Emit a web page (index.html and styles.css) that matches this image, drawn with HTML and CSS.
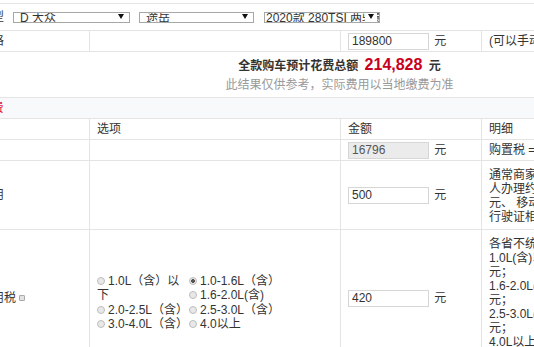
FILE: index.html
```html
<!DOCTYPE html>
<html lang="zh-CN">

<head>
    <meta charset="UTF-8">
    <meta name="viewport" content="width=device-width, initial-scale=1.0">
    <title>购车计算器</title>
    <link rel="stylesheet" href="styles.css">
</head>

<body>
    <div class="calc">
        <table class="calc-table">
            <colgroup>
                <col class="col-name">
                <col class="col-opt">
                <col class="col-amt">
                <col class="col-note">
            </colgroup>

            <tr class="row-car">
                <td colspan="4">
                    <div class="car-pick">
                        <span class="car-label">选择车型</span>
                        <div class="fake-select sel-brand"><span class="sel-text">D 大众</span><i class="sel-arrow"></i></div>
                        <div class="fake-select sel-series"><span class="sel-text">途岳</span><i class="sel-arrow"></i></div>
                        <div class="fake-select sel-model"><span class="sel-text">2020款 280TSI 两驱豪华版</span><i class="sel-arrow"></i></div>
                    </div>
                </td>
            </tr>

            <tr>
                <td class="name">裸车价格</td>
                <td></td>
                <td><input class="amount" type="text" value="189800"> 元</td>
                <td class="note">(可以手动修改)</td>
            </tr>

            <tr class="row-total">
                <td colspan="4">
                    <div class="total-line">全款购车预计花费总额 <span class="total-num">214,828</span> 元</div>
                    <div class="total-tip">此结果仅供参考，实际费用以当地缴费为准</div>
                </td>
            </tr>

            <tr class="row-section">
                <td colspan="4"><span class="section-title">必要花费</span></td>
            </tr>

            <tr class="row-head">
                <td class="name">项目</td>
                <td>选项</td>
                <td>金额</td>
                <td>明细</td>
            </tr>

            <tr>
                <td class="name">购置税</td>
                <td></td>
                <td><input class="amount readonly" type="text" value="16796" readonly> 元</td>
                <td class="note">购置税 = 购车款/(1+13%)×购置税率(10%)</td>
            </tr>

            <tr class="row-plate">
                <td class="name">上牌费用</td>
                <td></td>
                <td><input class="amount" type="text" value="500"> 元</td>
                <td class="note note-block">通常商家提供的上牌服务收费约500元，个<br>人办理约373元，其中：车辆购置税费约<br>元、 移动证30元、上牌费用100元、<br>行驶证相关工本费约15元</td>
            </tr>

            <tr class="row-tax">
                <td class="name">车船使用税<i class="tip-icon"></i></td>
                <td>
                    <div class="radios">
                        <label class="radio"><i class="dot"></i>1.0L（含）以下</label>
                        <label class="radio"><i class="dot checked"></i>1.0-1.6L（含）</label>
                        <label class="radio"><i class="dot"></i>1.6-2.0L(含)</label>
                        <label class="radio"><i class="dot"></i>2.0-2.5L（含）</label>
                        <label class="radio"><i class="dot"></i>2.5-3.0L（含）</label>
                        <label class="radio"><i class="dot"></i>3.0-4.0L（含）</label>
                        <label class="radio"><i class="dot"></i>4.0以上</label>
                    </div>
                </td>
                <td><input class="amount" type="text" value="420"> 元</td>
                <td class="note note-tax">各省不统一，以北京为例(单位为每年)：<br>1.0L(含)以下300<br>元；<br>1.6-2.0L(含)480<br>元；<br>2.5-3.0L(含)1800<br>元；<br>4.0L以上5400<br>元</td>
            </tr>
        </table>
    </div>
</body>

</html>
```

FILE: styles.css
```css
body {
    margin: 0;
    padding: 0;
    font-family: "Liberation Sans", "Noto Sans CJK SC", sans-serif;
    font-size: 12px;
    color: #333;
    background-color: #fff;
    overflow: hidden;
}

/* the calculator is wider than the window, the first column is scrolled off */
.calc {
    width: 788px;
    margin-left: -55px;
    padding-top: 3px;
}

.calc-table {
    width: 788px;
    border-collapse: collapse;
    table-layout: fixed;
}

.col-name {
    width: 144px;
}

.col-opt {
    width: 251px;
}

.col-amt {
    width: 141px;
}

.col-note {
    width: 252px;
}

.calc-table td {
    border: 1px solid #e4e4e4;
    height: 20px;
    padding: 0 6px 0 7px;
    line-height: 14px;
    vertical-align: middle;
    white-space: nowrap;
    overflow: hidden;
}

.calc-table td.name {
    padding-left: 10px;
}

/* car picker */
.row-car td {
    height: 26px;
    padding-left: 10px;
}

.car-pick {
    display: flex;
    align-items: center;
}

.car-label {
    width: 57px;
}

.fake-select {
    position: relative;
    height: 9px;
    border: 1px solid #a7a7a7;
    overflow: hidden;
    background: #fff;
}

.sel-brand {
    width: 115px;
    margin-right: 9px;
}

.sel-series {
    width: 113px;
    margin-right: 10px;
}

.sel-model {
    width: 114px;
}

.sel-text {
    display: block;
    margin-top: -1px;
    padding: 0 16px 0 6px;
    line-height: 12px;
    overflow: hidden;
}

.sel-model .sel-text {
    padding-left: 1px;
}

.sel-arrow {
    position: absolute;
    right: 5px;
    top: 1px;
    width: 0;
    height: 0;
    border-left: 3px solid transparent;
    border-right: 3px solid transparent;
    border-top: 5px solid #111;
}

.sel-model .sel-arrow {
    background: #fff;
    box-shadow: 0 0 0 3px #fff;
}

/* inputs */
.amount {
    width: 81px;
    height: 17px;
    padding: 0 3px;
    margin: 0 2px 0 0;
    border: 1px solid #d6d6d6;
    box-sizing: border-box;
    font-family: "Liberation Sans", sans-serif;
    font-size: 12px;
    color: #333;
    vertical-align: middle;
}

.amount.readonly {
    background-color: #ebebeb;
    color: #555;
}

/* total */
.row-total td {
    height: auto;
    padding: 3px 0 3px;
    border-left: none;
    border-right: none;
    text-align: center;
}

.total-line {
    line-height: 20px;
    font-weight: bold;
}

.total-num {
    color: #c8001e;
    font-size: 16px;
    margin: 0 3px;
}

.total-tip {
    line-height: 18px;
    color: #999;
}

.row-section td {
    background-color: #f8f9fb;
    padding-left: 10px;
    border-left: none;
    border-right: none;
}

.section-title {
    color: #d9173f;
}

/* rows */
.note-block {
    line-height: 12px;
}

.row-plate td {
    height: 61px;
}

.row-plate td.note {
    vertical-align: top;
    padding-top: 7px;
}

.row-tax td.note {
    vertical-align: top;
    padding-top: 7px;
    padding-bottom: 3px;
}

.note-tax {
    line-height: 14px;
}

.tip-icon {
    display: inline-block;
    width: 4px;
    height: 4px;
    margin-left: 3px;
    border: 1px solid #aaa;
    border-radius: 1px;
    background: #e2e2e2;
    vertical-align: 1px;
}

/* radio list */
.radios {
    overflow: hidden;
    white-space: normal;
    line-height: 14.5px;
    margin-top: 9px;
}

.radio {
    float: left;
    width: 92px;
}

.dot {
    display: inline-block;
    width: 6px;
    height: 6px;
    margin: 0 3px 0 0;
    border: 1px solid #bdbdbd;
    border-radius: 50%;
    background: #e8e8e8;
    vertical-align: 0;
}

.dot.checked {
    background: radial-gradient(circle, #555 0 1.6px, #e8e8e8 2.2px);
}
```
